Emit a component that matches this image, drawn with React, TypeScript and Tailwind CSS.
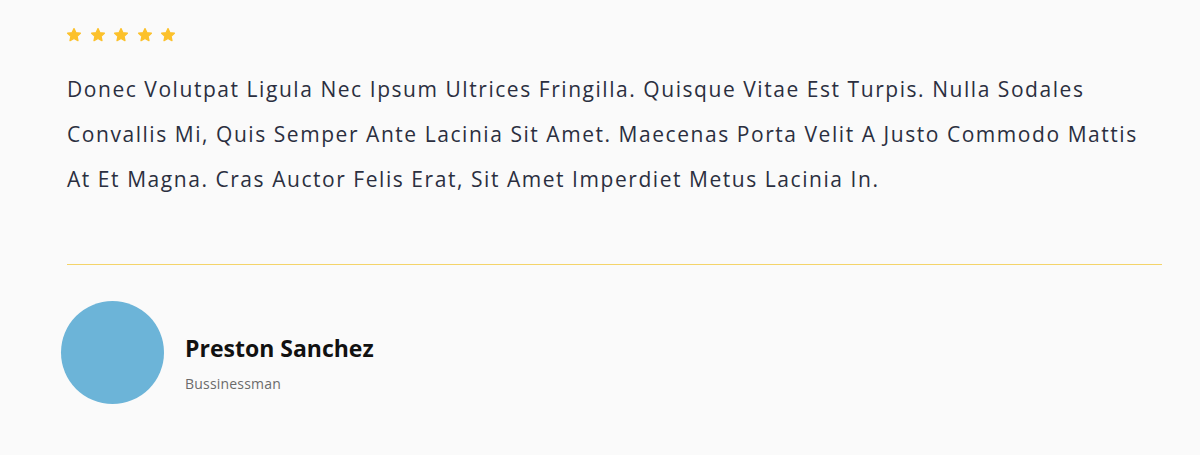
import React from "react";

function Star() {
  return (
    <svg width="16" height="16" viewBox="0 0 24 24" className="shrink-0">
      <path
        d="M12 2.4l2.9 6.1 6.7.8-4.95 4.6 1.3 6.6L12 17.2l-5.95 3.3 1.3-6.6L2.4 9.3l6.7-.8z"
        fill="#fcc12b"
        stroke="#fcc12b"
        strokeWidth="2"
        strokeLinejoin="round"
      />
    </svg>
  );
}

export default function App() {
  return (
    <div
      className="w-[1200px] h-[455px] bg-[#fafafa] pl-[66px] pr-[38px] pt-[27px]"
      style={{ fontFamily: "'Open Sans', sans-serif" }}
    >
      <div className="flex gap-[7.6px] items-center">
        <Star />
        <Star />
        <Star />
        <Star />
        <Star />
      </div>
      <p className="mt-[24px] pl-[1px] text-[21px] leading-[45px] tracking-[1.55px] text-[#2b2f3f] whitespace-nowrap">
        Donec Volutpat Ligula Nec Ipsum Ultrices Fringilla. Quisque Vitae Est Turpis. Nulla Sodales
        <br />
        Convallis Mi, Quis Semper Ante Lacinia Sit Amet. Maecenas Porta Velit A Justo Commodo Mattis
        <br />
        At Et Magna. Cras Auctor Felis Erat, Sit Amet Imperdiet Metus Lacinia In.
      </p>
      <div className="mt-[62px] ml-[1px] h-px bg-[#f4d46a]" />
      <div className="mt-[36px] flex items-start -ml-[5px]">
        <div className="w-[103px] h-[103px] rounded-full bg-[#6cb4d8] shrink-0" />
        <div className="ml-[21px] mt-[33px] flex flex-col">
          <div className="text-[23px] font-bold text-[#111111] leading-[28px]">Preston Sanchez</div>
          <div className="mt-[13px] text-[14px] tracking-[0.2px] text-[#6b6b6b] leading-[18px]">Bussinessman</div>
        </div>
      </div>
    </div>
  );
}
